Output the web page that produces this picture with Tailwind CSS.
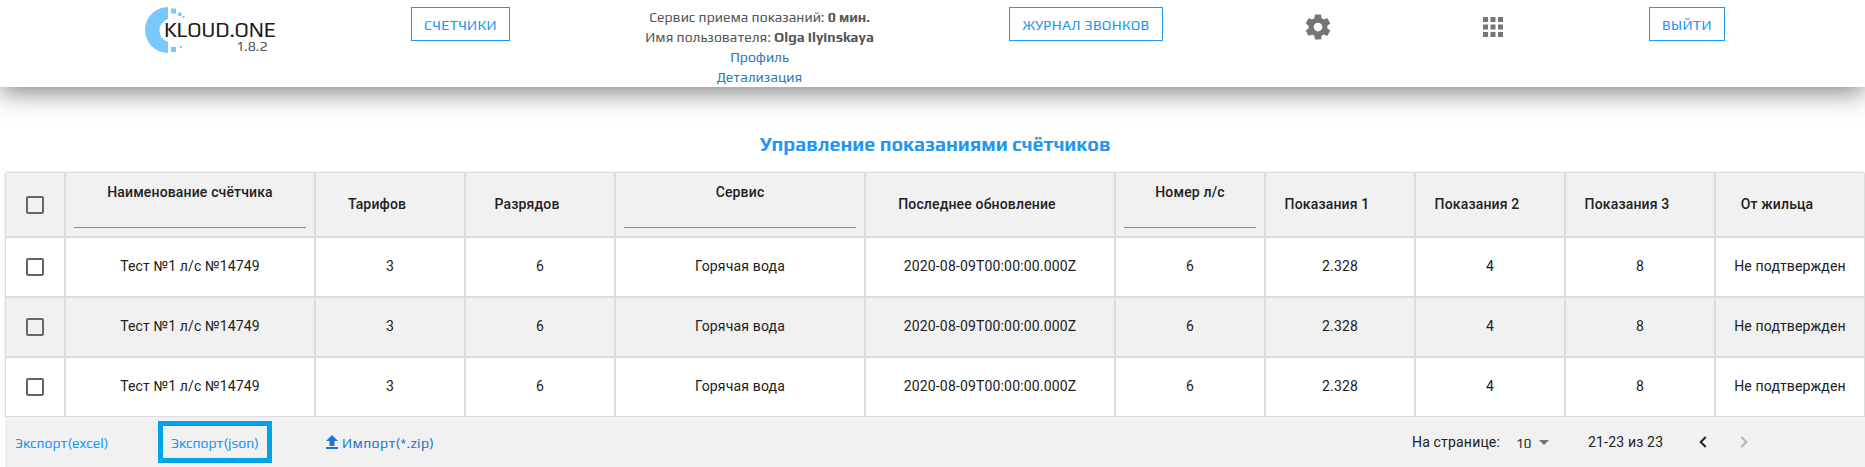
<!DOCTYPE html>
<html lang="ru">
<head>
<meta charset="utf-8">
<title>KLOUD.ONE</title>
<script src="https://cdn.jsdelivr.net/npm/@tailwindcss/browser@4"></script>
</head>
<body class="flex h-[467px] flex-col overflow-hidden bg-white font-['Roboto',sans-serif] text-sm text-[#212121]">

<header class="flex h-[87px] shrink-0 items-start bg-white font-['Play','Open_Sans',sans-serif] text-[14px] leading-5 text-[#555] shadow-[0_5px_25px_rgba(0,0,0,0.5)]">
  <div class="relative ml-[145px] mt-[7px] h-[46px] w-[130px]">
    <svg class="h-[46px] w-[42px]" viewBox="0 0 42 46" fill="#7ac7ff">
      <path d="M23 0A23 23 0 0 0 23 46V35A12 12 0 0 1 23 12Z"/>
      <rect x="26" y="1.500" width="5" height="5"/><rect x="33" y="5.500" width="3.500" height="3.500"/><rect x="37.500" y="9" width="2" height="2"/>
      <rect x="26" y="40" width="5" height="5"/><rect x="35" y="39" width="2" height="2"/>
    </svg>
    <div class="absolute left-[19px] top-[11px] h-[24px] whitespace-nowrap text-[21px] leading-[24px] tracking-[-0.2px] text-[#1c1c1c] [text-shadow:0_0_2px_#fff,-1px_0_2px_#fff,-2px_0_2px_#fff]">KLOUD.ONE</div>
    <div class="absolute left-[91px] top-[29px]">1.8.2</div>
  </div>
  <button class="ml-[136px] mt-[7px] h-[34px] w-[99px] whitespace-nowrap border border-[#2196f3] pt-px text-[14px] tracking-[0.35px] text-[#2196f3]">СЧЕТЧИКИ</button>
  <div class="ml-[99px] mt-[7px] w-[301px] whitespace-nowrap text-center">
    <div>Сервис приема показаний: <b>0 мин.</b></div>
    <div>Имя пользователя: <b>Olga Ilyinskaya</b></div>
    <div class="text-[#337ab7]">Профиль</div>
    <div class="text-[#337ab7]">Детализация</div>
  </div>
  <button class="ml-[99px] mt-[7px] h-[34px] w-[154px] whitespace-nowrap border border-[#2196f3] pt-px text-[14px] tracking-[0.35px] text-[#2196f3]">ЖУРНАЛ ЗВОНКОВ</button>
  <svg class="ml-[140px] mt-[12px] size-[30px]" viewBox="0 0 24 24" fill="#757575"><path d="M19.43 12.98c.04-.32.07-.64.07-.98s-.03-.66-.07-.98l2.110-1.650c.19-.15.24-.42.12-.64l-2-3.460c-.12-.22-.39-.3-.61-.22l-2.490 1c-.52-.4-1.080-.73-1.690-.98l-.38-2.650C14.460 2.180 14.250 2 14 2h-4c-.25 0-.46.18-.49.42l-.38 2.650c-.61.25-1.170.59-1.690.98l-2.490-1c-.23-.09-.49 0-.61.22l-2 3.460c-.13.22-.07.49.12.64l2.110 1.650c-.04.32-.07.65-.07.98s.03.66.07.98l-2.110 1.650c-.19.15-.24.42-.12.64l2 3.460c.12.22.39.3.61.22l2.490-1c.52.4 1.080.73 1.690.98l.38 2.650c.03.24.24.42.49.42h4c.25 0 .46-.18.49-.42l.38-2.650c.61-.25 1.170-.59 1.690-.98l2.490 1c.23.09.49 0 .61-.22l2-3.460c.12-.22.07-.49-.12-.64l-2.110-1.650zM12 15.500c-1.930 0-3.500-1.570-3.500-3.500s1.570-3.500 3.500-3.500 3.500 1.570 3.500 3.500-1.570 3.500-3.500 3.500z"/></svg>
  <svg class="ml-[145px] mt-[12px] size-[30px]" viewBox="0 0 24 24" fill="#757575"><path d="M4 8h4V4H4v4zm6 12h4v-4h-4v4zm-6 0h4v-4H4v4zm0-6h4v-4H4v4zm6 0h4v-4h-4v4zm6-10v4h4V4h-4zm-6 4h4V4h-4v4zm6 6h4v-4h-4v4zm0 6h4v-4h-4v4z"/></svg>
  <button class="ml-[141px] mt-[7px] h-[34px] w-[76px] whitespace-nowrap border border-[#2196f3] pt-px text-[14px] tracking-[0.35px] text-[#2196f3]">ВЫЙТИ</button>
</header>

<main class="flex flex-col pl-[5px]">
  <h1 class="mt-[43px] h-[42px] text-center font-['Play','Open_Sans',sans-serif] text-[19.6px] font-bold leading-[28px] text-[#2196f3]">Управление показаниями счётчиков</h1>

  <div id="grid" class="w-[1860px] overflow-hidden rounded-t-[3px] shadow-[0_0_2px_rgba(0,0,0,0.2)] tracking-[0.16px]"></div>

  <footer class="flex h-[50px] items-center bg-[#f1f1f1]">
    <div class="flex h-full items-center whitespace-nowrap font-['Play','Open_Sans',sans-serif] text-[14px] text-[#2196f3]">
      <a class="ml-[10px] mt-[2px] w-[143px]">Экспорт(excel)</a>
      <a class="flex h-[42px] w-[114px] items-center justify-center border-[5px] border-[#00a2e8] pt-[2px]">Экспорт(json)</a>
      <a class="ml-[52px] mt-[2px] flex items-center tracking-[0.35px] text-[#1976d2]">
        <svg class="mr-[2px] size-[16px]" viewBox="0 0 16 16" fill="#1976d2"><path d="M8 0L14 6H10.500V11H5.500V6H2ZM2 12H14V14H2Z"/></svg>Импорт(*.zip)</a>
    </div>
    <div class="ml-auto flex w-[453px] items-center whitespace-nowrap tracking-[0.18px]">
      <span class="w-[104px]">На странице:</span>
      <span class="mt-[4px] w-[23px] font-['Play','Open_Sans',sans-serif] text-[13px]">10</span>
      <svg class="h-[5px] w-[10px]" viewBox="0 0 10 5" fill="#757575"><path d="M0 0H10L5 5Z"/></svg>
      <span class="ml-[39px] w-[111px]">21-23 из 23</span>
      <svg class="h-[12px] w-[8px]" viewBox="0 0 8 12" fill="none" stroke="#212121" stroke-width="2"><path d="M6.700 1L1.700 6L6.700 11"/></svg>
      <svg class="ml-[33px] h-[12px] w-[8px]" viewBox="0 0 8 12" fill="none" stroke="#b5b5b5" stroke-width="2"><path d="M1.300 1L6.300 6L1.300 11"/></svg>
    </div>
  </footer>
</main>

<script>
const box = '<span class="size-[18px] rounded-[2px] border-2 border-[#666]"></span>';
const head = ['Наименование счётчика','Тарифов','Разрядов','Сервис','Последнее обновление','Номер л/с','Показания 1','Показания 2','Показания 3','От жильца'];
const filtered = [0, 3, 5];
const cells = ['Тест №1 л/с №14749','3','6','Горячая вода','2020-08-09T00:00:00.000Z','6','2.328','4','8','Не подтвержден'];
const row = 'grid grid-cols-[60px_250px_150px_150px_250px_250px_150px_150px_150px_150px_150px]';
const cell = 'flex items-center justify-center whitespace-nowrap border border-[#dcdcdc]';
let html = `<div class="${row} h-[65px] bg-[#f1f1f1] font-medium"><div class="${cell} pt-px">${box}</div>` +
  head.map((t, i) => filtered.includes(i)
    ? `<div class="${cell} items-start px-2"><div class="flex h-[55px] w-full justify-center border-b border-[#8a8a8a] pt-[9px] leading-5">${t}</div></div>`
    : `<div class="${cell} pr-[26px] pb-[2px]">${t}</div>`).join('') + '</div>';
for (let r = 0; r < 3; r++) {
  html += `<div class="${row} h-[60px] ${r % 2 ? 'bg-[#f1f1f1]' : 'bg-white'}"><div class="${cell}">${box}</div>` +
    cells.map(t => `<div class="${cell} pb-[2px]">${t}</div>`).join('') + '</div>';
}
document.getElementById('grid').innerHTML = html;
</script>
</body>
</html>
